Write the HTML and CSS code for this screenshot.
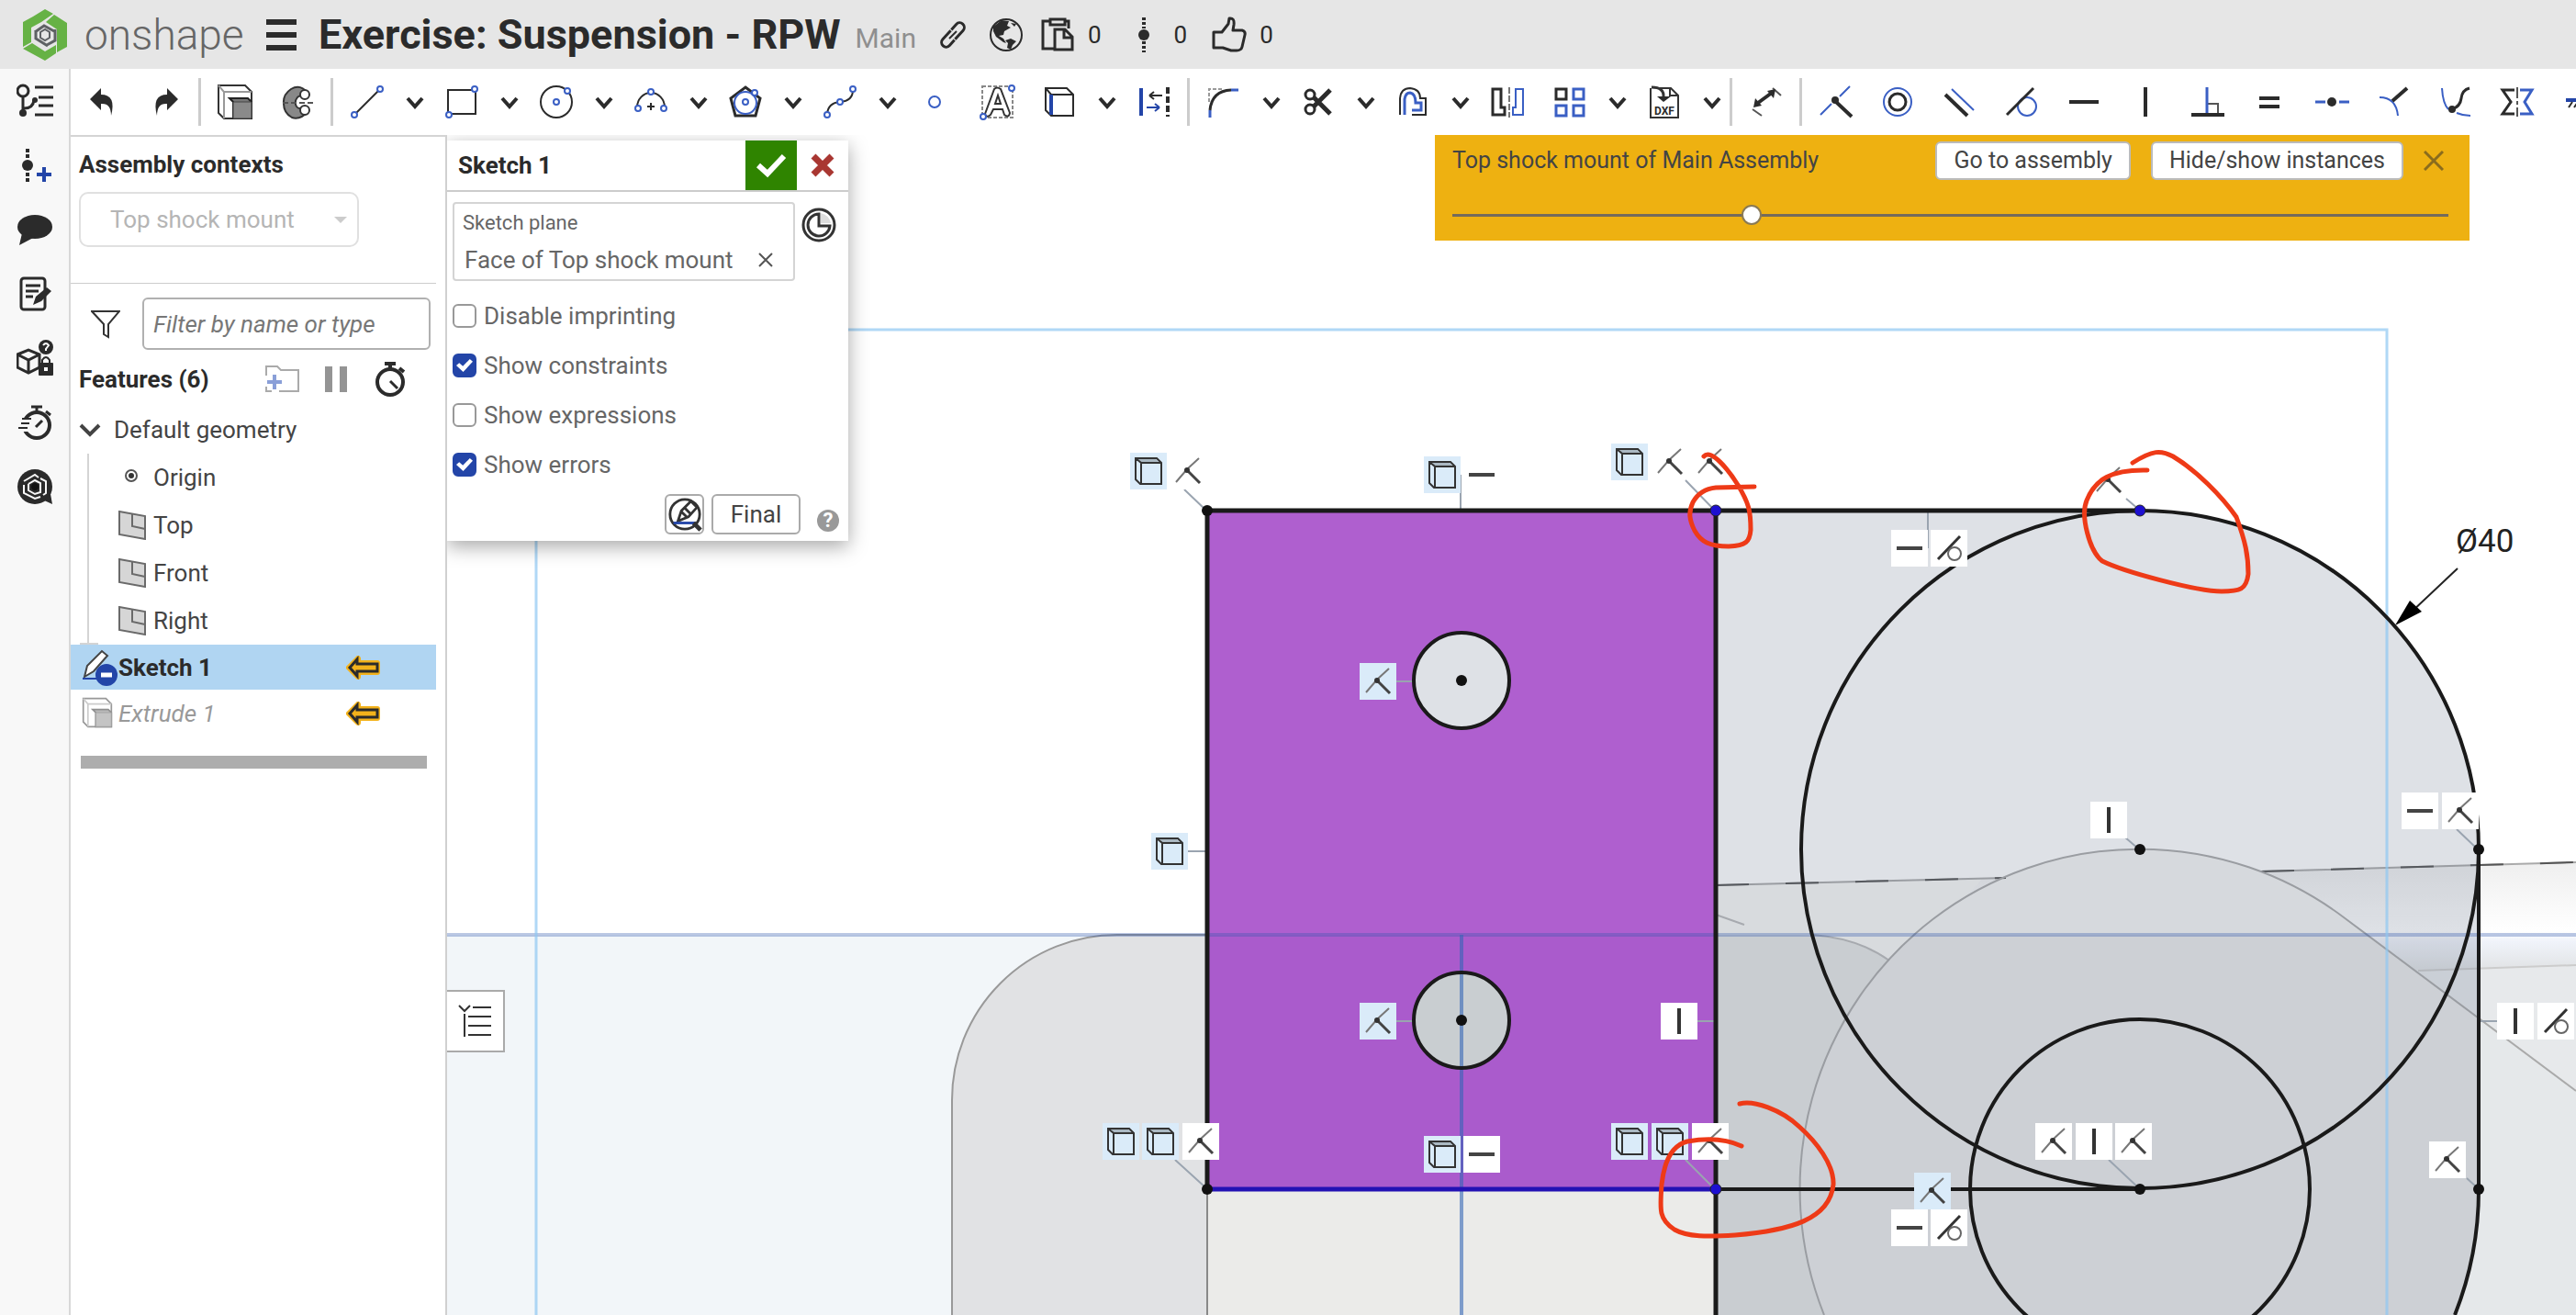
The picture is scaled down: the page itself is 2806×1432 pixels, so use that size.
FILE: index.html
```html
<!DOCTYPE html>
<html lang="en">
<head>
<meta charset="utf-8">
<meta name="viewport" content="width=device-width, initial-scale=1">
<title>Exercise: Suspension - RPW</title>
<link rel="stylesheet" href="styles.css">
</head>
<body>
<svg class="defs" aria-hidden="true">
  <defs>
    <symbol id="chevron" viewBox="-12 -12 24 24"><path d="M-8-4 0 5 8-4" fill="none" stroke="#2b2b2b" stroke-width="4"/></symbol>
    <symbol id="cube" viewBox="-20 -20 40 40"><path d="M-12-13H8L12-9H-8Z" fill="#aab8c2"/><path d="M-14-14H9L14-9V14H-9L-14 9ZM-14-14-8-9V13M-8-9H14" fill="none" stroke="#333" stroke-width="2"/></symbol>
    <symbol id="coincident" viewBox="-20 -20 40 40"><path d="M-13 12-1-2 12-14" fill="none" stroke="#777" stroke-width="2"/><path d="M0 0 13 13" stroke="#444" stroke-width="3"/><circle cx="-1" cy="-1" r="3" fill="#333"/></symbol>
    <symbol id="horizontal" viewBox="-20 -20 40 40"><path d="M-14 0H14" stroke="#444" stroke-width="4"/></symbol>
    <symbol id="vertical" viewBox="-20 -20 40 40"><path d="M0-14V14" stroke="#333" stroke-width="4"/></symbol>
    <symbol id="tangent" viewBox="-20 -20 40 40"><path d="M-12 12 12-13" stroke="#333" stroke-width="3"/><circle cx="6" cy="6" r="7" fill="none" stroke="#666" stroke-width="2"/></symbol>
    <symbol id="context-arrow" viewBox="0 0 38 26"><path d="M3 13 13 3V8H34V18H13V23Z" fill="#f3b21b" stroke="#f3b21b" stroke-width="6" stroke-linejoin="round"/><path d="M4 13 12 4V9H34V17H12V22Z" fill="#f3b21b" stroke="#2b2b2b" stroke-width="3"/></symbol>
    <symbol id="plane" viewBox="0 0 30 32"><path d="M1 1 29 6V31L1 26Z" fill="#d6d6d6" stroke="#6a6a6a" stroke-width="2"/><path d="M15 4V17L29 20" fill="none" stroke="#6a6a6a" stroke-width="2"/></symbol>
    <symbol id="extrude" viewBox="-20 -20 40 40"><path d="M-18-18H11L18-11V18H-12L-18 12Z" fill="#fff" stroke="#333" stroke-width="2"/><path d="M-18-18-12-11V18M-12-11H18" fill="none" stroke="#999" stroke-width="2"/><path d="M-6-4-2 0V18H18V0L14-4Z" fill="#777" stroke="#222" stroke-width="2"/><path d="M-2 0H18V18H-2Z" fill="#8a8a8a" stroke="#444"/></symbol>
    <symbol id="stopwatch" viewBox="-20 -20 40 40"><circle cy="3" r="14" fill="none" stroke="#2b2b2b" stroke-width="4"/><path d="M-6-17H6M0-17V-11M10-12 15-8" stroke="#2b2b2b" stroke-width="4"/></symbol>
  </defs>
</svg>

<header class="topbar">
  <a class="brand" href="#" aria-label="onshape">
    <svg class="brand-mark" viewBox="0 0 50 56" aria-hidden="true">
      <path d="M12 8 25 0 34 5 21 14 10 20V36L1 41V14Z" fill="#66b245"/>
      <path d="M35 6 49 15V41L38 47V22L26 14Z" fill="#66b245"/>
      <path d="M1 43 11 37 25 46 37 39V48L25 56Z" fill="#66b245"/>
      <path d="M14 25 24 18 35 24M36 22V34L27 39M28 40 15 32V23" fill="none" stroke="#5e6164" stroke-width="3"/>
      <path d="M20 25 25 22 30 25V31L25 34 20 31Z" fill="none" stroke="#5e6164" stroke-width="2"/>
    </svg>
    <span class="brand-name">onshape</span>
  </a>
  <button class="menu" type="button" aria-label="Menu"><span></span><span></span><span></span></button>
  <h1>Exercise: Suspension - RPW</h1>
  <span class="branch">Main</span>
  <button class="plain link" type="button" aria-label="Share link"><svg viewBox="-20 -20 40 40"><g transform="rotate(-48)" fill="none" stroke="#2b2b2b" stroke-width="3"><path d="M2-5H-11A5 5 0 0 0-11 5H-3"/><path d="M-2 5H11A5 5 0 0 0 11-5H3"/></g><path d="M-4 4 4-4" stroke="#2b2b2b" stroke-width="2"/></svg></button>
  <button class="plain globe" type="button" aria-label="Public"><svg viewBox="-20 -20 40 40"><circle r="17" fill="none" stroke="#2b2b2b" stroke-width="2"/><path d="M-14-9-5-16 3-15 1-10 5-8-2-4-3 0-8 1-3 4 0 9-3 8-11 2-14-4ZM5-13 11-12 9-9ZM-1 6 5 4 11 7 7 11 5 16 1 14 2 9Z" fill="#2b2b2b"/></svg></button>
  <button class="stat" type="button" aria-label="Copies"><svg viewBox="-20 -20 40 40"><path d="M-8-15H-16V15H-2M8-15H12V-7M-8-17H8V-11H-8ZM-3-6H8L16 2V16H-3ZM7-6V3H16" fill="none" stroke="#2b2b2b" stroke-width="3"/></svg><span>0</span></button>
  <button class="stat" type="button" aria-label="Versions"><svg viewBox="-20 -20 40 40"><circle r="6" fill="#2b2b2b"/><path d="M0-19V-7M0 7V19" stroke="#2b2b2b" stroke-width="4" stroke-dasharray="3 2"/></svg><span>0</span></button>
  <button class="stat" type="button" aria-label="Likes"><svg viewBox="-20 -20 40 40"><path d="M-17-3H-8L-1-12 0-18Q6-19 5-11L4-5H14Q18-4 17 0L14 13Q13 17 8 17H2L-7 14H-17Z" fill="none" stroke="#2b2b2b" stroke-width="3" stroke-linejoin="round"/></svg><span>0</span></button>
</header>

<div class="workspace">
  <nav class="rail" aria-label="Tools">
    <button type="button" aria-label="Structure"><svg viewBox="-20 -20 40 40"><g fill="none" stroke="#2b2b2b" stroke-width="3"><circle cx="-13" cy="-11" r="6"/><path d="M-13-5V12M-12 8Q-2 8-1-1M0-15H20M4-4H20M4 5H20M0 15H20"/></g><circle cx="-13" cy="13" r="4" fill="#2b2b2b"/><circle cx="0" cy="-1" r="3" fill="#2b2b2b"/></svg></button>
    <button type="button" aria-label="Create version"><svg viewBox="-20 -20 40 40"><circle cx="-8" r="6" fill="#2b2b2b"/><path d="M-8-18V-7M-8 8V19" stroke="#2b2b2b" stroke-width="4" stroke-dasharray="4 2"/><path d="M2 10H18M10 2V18" stroke="#2345a8" stroke-width="4"/></svg></button>
    <button type="button" aria-label="Comments"><svg viewBox="-20 -20 40 40"><ellipse cy="-3" rx="19" ry="13" fill="#2b2b2b"/><path d="M-14 4-17 17 0 8Z" fill="#2b2b2b"/></svg></button>
    <button type="button" aria-label="Notes"><svg viewBox="-20 -20 40 40"><rect x="-15" y="-17" width="26" height="34" rx="3" fill="none" stroke="#2b2b2b" stroke-width="3"/><path d="M-10-9H6M-10-3H4M-10 3H-2" stroke="#2b2b2b" stroke-width="3"/><path d="M-2 12 1 3 13-7 18-3 7 8Z" fill="#2b2b2b"/></svg></button>
    <button type="button" aria-label="Part lock"><svg viewBox="-20 -20 40 40"><path d="M-19-4-7-9 5-4V10L-7 16-19 10ZM-19-4-7 2 5-4M-7 2V16" fill="none" stroke="#2b2b2b" stroke-width="3"/><circle cx="12" cy="-12" r="8" fill="#2b2b2b"/><path d="M9-14Q12-18 15-14L12-10V-8" fill="none" stroke="#fff" stroke-width="2"/><path d="M8 6V2Q12-4 16 2V6" fill="none" stroke="#2b2b2b" stroke-width="2"/><rect x="4" y="5" width="16" height="14" rx="1" fill="#2b2b2b"/><rect x="10" y="10" width="4" height="4" fill="#fff"/></svg></button>
    <button type="button" aria-label="Performance"><svg viewBox="-20 -20 40 40"><circle cx="2" cy="3" r="14" fill="none" stroke="#2b2b2b" stroke-width="4"/><path d="M-14-5H-4V10H-14Z" fill="#f8f8f8"/><path d="M-4-17H8M2-17V-11M12-12 17-8" stroke="#2b2b2b" stroke-width="3"/><path d="M-14-4H-4M-15 1H-6M-18 6H-8" stroke="#2b2b2b" stroke-width="2"/><path d="M1 5 8-2" stroke="#2b2b2b" stroke-width="3"/></svg></button>
    <button type="button" aria-label="Learning"><svg viewBox="-20 -20 40 40"><circle r="19" fill="#2b2b2b"/><path d="M8 14 19 19 17 8Z" fill="#2b2b2b"/><path d="M-12-6 0-13 4-10M6-9 12-6V7L9 9M6 11 0 13-12 7V-2M-7-3 0-7 6-4V6L0 8-7 4V-3" fill="none" stroke="#f8f8f8" stroke-width="2"/><circle r="4" fill="#111"/></svg></button>
  </nav>

  <div class="toolbar" role="toolbar" aria-label="Sketch tools">
    <button class="tool" type="button" aria-label="Undo"><svg viewBox="-20 -20 40 40"><path d="M-14-3-2-15V-8Q15-8 9 15 9 1-2 2V9Z" fill="#2b2b2b"/></svg></button>
    <button class="tool" type="button" aria-label="Redo"><svg viewBox="-20 -20 40 40"><path d="M14-3 2-15V-8Q-15-8-9 15-9 1 2 2V9Z" fill="#2b2b2b"/></svg></button>
    <span class="sep"></span>
    <button class="tool" type="button" aria-label="Extrude"><svg><use href="#extrude"/></svg></button>
    <button class="tool" type="button" aria-label="Revolve"><svg viewBox="-20 -20 40 40"><path d="M11-10Q3-20-7-14-16-8-15 2-15 12-6 17 3 20 12 10L6 5Q2 9-1 5-4 0 0-5 3-8 6-5Z" fill="#888" stroke="#333" stroke-width="2"/><circle cx="8" cy="-8" r="5" fill="#fff" stroke="#333" stroke-width="2"/><circle cx="8" cy="9" r="5" fill="#fff" stroke="#333" stroke-width="2"/><path d="M-16 1H18" stroke="#555" stroke-width="2" stroke-dasharray="6 3"/></svg></button>
    <span class="sep"></span>
    <button class="tool" type="button" aria-label="Line"><svg viewBox="-20 -20 40 40"><path d="M-12 12 12-12" stroke="#2b2b2b" stroke-width="2"/><g fill="#fff" stroke="#3a5fc4" stroke-width="2"><circle cx="14" cy="-14" r="3"/><circle cx="-14" cy="14" r="3"/></g></svg></button>
    <button class="drop" type="button" aria-label="More lines"><svg><use href="#chevron"/></svg></button>
    <button class="tool" type="button" aria-label="Rectangle"><svg viewBox="-20 -20 40 40"><path d="M-15-13H15V13H-15Z" fill="none" stroke="#2b2b2b" stroke-width="2"/><g fill="#fff" stroke="#3a5fc4" stroke-width="2"><circle cx="14" cy="-14" r="3"/><circle cx="-14" cy="14" r="3"/></g></svg></button>
    <button class="drop" type="button" aria-label="More rectangles"><svg><use href="#chevron"/></svg></button>
    <button class="tool" type="button" aria-label="Circle"><svg viewBox="-20 -20 40 40"><circle r="17" fill="none" stroke="#2b2b2b" stroke-width="2"/><g fill="#fff" stroke="#3a5fc4" stroke-width="2"><circle r="3"/><circle cx="12" cy="-12" r="3"/></g></svg></button>
    <button class="drop" type="button" aria-label="More circles"><svg><use href="#chevron"/></svg></button>
    <button class="tool" type="button" aria-label="Arc"><svg viewBox="-20 -20 40 40"><path d="M-15 6A15 16 0 0 1 15 6M-4 5H4M0 1V9" fill="none" stroke="#2b2b2b" stroke-width="2"/><g fill="#fff" stroke="#3a5fc4" stroke-width="2"><circle cy="-11" r="3"/><circle cx="-14" cy="7" r="3"/><circle cx="14" cy="7" r="3"/></g></svg></button>
    <button class="drop" type="button" aria-label="More arcs"><svg><use href="#chevron"/></svg></button>
    <button class="tool" type="button" aria-label="Polygon"><svg viewBox="-20 -20 40 40"><path d="M0-16 16-4 11 15H-11L-16-4Z" fill="none" stroke="#2b2b2b" stroke-width="3"/><circle cy="1" r="12" fill="none" stroke="#3a5fc4" stroke-width="2"/><g fill="#fff" stroke="#3a5fc4" stroke-width="2"><circle r="3"/><circle cx="10" cy="-10" r="3"/></g></svg></button>
    <button class="drop" type="button" aria-label="More polygons"><svg><use href="#chevron"/></svg></button>
    <button class="tool" type="button" aria-label="Spline"><svg viewBox="-20 -20 40 40"><path d="M-14 13Q-13 1 0 0 14-1 14-13" fill="none" stroke="#2b2b2b" stroke-width="2"/><g fill="#fff" stroke="#3a5fc4" stroke-width="2"><circle r="3"/><circle cx="14" cy="-14" r="3"/><circle cx="-14" cy="14" r="3"/></g></svg></button>
    <button class="drop" type="button" aria-label="More splines"><svg><use href="#chevron"/></svg></button>
    <button class="tool" type="button" aria-label="Point"><svg viewBox="-20 -20 40 40"><circle r="6" fill="none" stroke="#3a5fc4" stroke-width="2"/></svg></button>
    <button class="tool" type="button" aria-label="Text"><svg viewBox="-20 -20 40 40"><path d="M-16-17H17V17H-16Z" fill="none" stroke="#888" stroke-width="2" stroke-dasharray="4 2"/><path d="M-3-14Q0-17 4-14L14 12Q13 18 8 14L6 8H-4L-7 14Q-12 18-13 13ZM-2 2H4L1-7Z" fill="#fff" stroke="#333" stroke-width="2"/><g fill="#fff" stroke="#3a5fc4" stroke-width="2"><circle cx="16" cy="-15" r="3"/><circle cx="-15" cy="16" r="3"/></g></svg></button>
    <button class="tool" type="button" aria-label="Use"><svg viewBox="-20 -20 40 40"><path d="M-15-15H8L15-8V15H-9L-15 9ZM-15-15-9-8H15" fill="none" stroke="#2b2b2b" stroke-width="2"/><path d="M-9-8V14" stroke="#2345a8" stroke-width="4"/></svg></button>
    <button class="drop" type="button" aria-label="More projection tools"><svg><use href="#chevron"/></svg></button>
    <button class="tool" type="button" aria-label="Construction"><svg viewBox="-20 -20 40 40"><path d="M-14-15V15" stroke="#2345a8" stroke-width="4"/><path d="M15-16V16" stroke="#2b2b2b" stroke-width="4" stroke-dasharray="7 3"/><path d="M-5-7H9M-5-7 0-11M-5-7 0-3" fill="none" stroke="#2b2b2b" stroke-width="2"/><path d="M-8 6H6M6 6 1 2M6 6 1 10" fill="none" stroke="#2345a8" stroke-width="2"/></svg></button>
    <span class="sep"></span>
    <button class="tool" type="button" aria-label="Fillet"><svg viewBox="-20 -20 40 40"><path d="M-16 0V-14H0" fill="none" stroke="#999" stroke-width="2" stroke-dasharray="4 2"/><path d="M-15 17V9M8-13H16" stroke="#3a5fc4" stroke-width="3"/><path d="M-15 9Q-13-12 8-13" fill="none" stroke="#2b2b2b" stroke-width="3"/></svg></button>
    <button class="drop" type="button" aria-label="More fillets"><svg><use href="#chevron"/></svg></button>
    <button class="tool" type="button" aria-label="Trim"><svg viewBox="-20 -20 40 40"><g fill="none" stroke="#2b2b2b"><circle cx="-9" cy="-8" r="5" stroke-width="3"/><circle cx="-9" cy="8" r="5" stroke-width="3"/><path d="M-5-5 13 13M-5 5 13-13" stroke-width="5"/></g></svg></button>
    <button class="drop" type="button" aria-label="More trims"><svg><use href="#chevron"/></svg></button>
    <button class="tool" type="button" aria-label="Offset"><svg viewBox="-20 -20 40 40"><path d="M-14 14V-4Q-13-15-3-15 8-14 8-4H14V14H-1" fill="none" stroke="#2b2b2b" stroke-width="2"/><path d="M-9 14V-3Q-8-10-3-10 3-9 3 1H9V9H-1" fill="none" stroke="#3a5fc4" stroke-width="3"/></svg></button>
    <button class="drop" type="button" aria-label="More offsets"><svg><use href="#chevron"/></svg></button>
    <button class="tool" type="button" aria-label="Mirror"><svg viewBox="-20 -20 40 40"><path d="M-16-14H-7V6H-3V14H-16Z" fill="none" stroke="#2b2b2b" stroke-width="3"/><path d="M17-14H9V6H6V14H17Z" fill="none" stroke="#3a5fc4" stroke-width="2"/><path d="M2-16V17" stroke="#777" stroke-width="2" stroke-dasharray="7 2"/></svg></button>
    <button class="tool" type="button" aria-label="Pattern"><svg viewBox="-20 -20 40 40"><path d="M-15-14H-4V-3H-15Z" fill="none" stroke="#2b2b2b" stroke-width="3"/><path d="M4-14H15V-3H4ZM-15 4H-4V15H-15ZM4 4H15V15H4Z" fill="none" stroke="#3a5fc4" stroke-width="3"/></svg></button>
    <button class="drop" type="button" aria-label="More patterns"><svg><use href="#chevron"/></svg></button>
    <button class="tool" type="button" aria-label="Import DXF"><svg viewBox="-20 -20 40 40"><path d="M-5-15H7L15-7V17H-15V-15M6-15V-7H15" fill="none" stroke="#333" stroke-width="2"/><path d="M-14-16Q0-16-1-5" fill="none" stroke="#333" stroke-width="3"/><path d="M-8-6H7L-1 0Z" fill="#2b2b2b"/><text x="0" y="14" class="dxf">DXF</text></svg></button>
    <button class="drop" type="button" aria-label="More imports"><svg><use href="#chevron"/></svg></button>
    <span class="sep"></span>
    <button class="tool" type="button" aria-label="Dimension"><svg viewBox="-20 -20 40 40"><path d="M-15 8-5 15M7-15 16-7" stroke="#555" stroke-width="2"/><path d="M-9 1 6-10" stroke="#2b2b2b" stroke-width="4"/><path d="M-14 6-12-4-5 4ZM10-14 8-4 1-12Z" fill="#2b2b2b"/></svg></button>
    <span class="sep"></span>
    <div class="constraints">
      <button type="button" aria-label="Coincident"><svg viewBox="-20 -20 40 40"><path d="M-17 14-5 2M4-6 15-17" stroke="#3a5fc4" stroke-width="2"/><path d="M0 0 17 16" stroke="#2b2b2b" stroke-width="4"/><circle cx="-1" cy="-2" r="4" fill="#2b2b2b"/></svg></button>
      <button type="button" aria-label="Concentric"><svg viewBox="-20 -20 40 40"><circle r="15" fill="none" stroke="#3a5fc4" stroke-width="2"/><circle r="9" fill="none" stroke="#2b2b2b" stroke-width="3"/></svg></button>
      <button type="button" aria-label="Parallel"><svg viewBox="-20 -20 40 40"><path d="M-16-8 8 15" stroke="#2b2b2b" stroke-width="4"/><path d="M-9-14 15 9" stroke="#3a5fc4" stroke-width="2"/></svg></button>
      <button type="button" aria-label="Tangent"><svg viewBox="-20 -20 40 40"><circle cx="6" cy="5" r="10" fill="none" stroke="#3a5fc4" stroke-width="2"/><path d="M-16 14 13-15" stroke="#2b2b2b" stroke-width="3"/></svg></button>
      <button type="button" aria-label="Horizontal"><svg viewBox="-20 -20 40 40"><path d="M-16 0H16" stroke="#2b2b2b" stroke-width="4"/></svg></button>
      <button type="button" aria-label="Vertical"><svg viewBox="-20 -20 40 40"><path d="M0-16V16" stroke="#2b2b2b" stroke-width="4"/></svg></button>
      <button type="button" aria-label="Perpendicular"><svg viewBox="-20 -20 40 40"><path d="M0 2H11V12" fill="none" stroke="#555" stroke-width="2"/><path d="M-1-16V12" stroke="#3a5fc4" stroke-width="3"/><path d="M-18 14H18" stroke="#2b2b2b" stroke-width="4"/></svg></button>
      <button type="button" aria-label="Equal"><svg viewBox="-20 -20 40 40"><path d="M-11-4H11M-11 5H11" stroke="#2b2b2b" stroke-width="4"/></svg></button>
      <button type="button" aria-label="Midpoint"><svg viewBox="-20 -20 40 40"><path d="M-18 0H-7M8 0H19" stroke="#3a5fc4" stroke-width="3"/><circle r="5" fill="#2b2b2b"/></svg></button>
      <button type="button" aria-label="Normal"><svg viewBox="-20 -20 40 40"><path d="M-15-5Q3-5 5 15" fill="none" stroke="#3a5fc4" stroke-width="2"/><path d="M-1-1 15-15" stroke="#2b2b2b" stroke-width="4"/></svg></button>
      <button type="button" aria-label="Pierce"><svg viewBox="-20 -20 40 40"><path d="M-15-15Q-14 2-8 8M1 12Q8 15 16 15" fill="none" stroke="#3a5fc4" stroke-width="2"/><path d="M-4 8Q5 5 6-4 7-13 15-15" fill="none" stroke="#2b2b2b" stroke-width="3"/><circle cx="-4" cy="8" r="4" fill="#2b2b2b"/></svg></button>
      <button type="button" aria-label="Symmetric"><svg viewBox="-20 -20 40 40"><path d="M-3-13H-16L-7 0-16 13H-3" fill="none" stroke="#2b2b2b" stroke-width="3"/><path d="M3-13H16L8 0 16 13H3" fill="none" stroke="#3a5fc4" stroke-width="3"/><path d="M0-16V16" stroke="#555" stroke-width="2" stroke-dasharray="12 3 4 3"/></svg></button>
    </div>
    <button class="tool" type="button" aria-label="Fix"><svg viewBox="-20 -20 40 40"><path d="M-15-2H17" stroke="#2345a8" stroke-width="4"/><path d="M-12 6-8 0M-6 6-2 0M0 6 4 0M6 6 10 0" stroke="#2b2b2b" stroke-width="2"/></svg></button>
  </div>

  <aside class="panel">
    <section class="contexts">
      <h2><label for="context">Assembly contexts</label></h2>
      <div class="select">
        <select id="context" disabled><option>Top shock mount</option></select>
        <svg viewBox="0 0 14 8" aria-hidden="true"><path d="M0 0H14L7 7Z" fill="#ccc"/></svg>
      </div>
    </section>
    <div class="filter">
      <svg viewBox="0 0 32 32" aria-hidden="true"><path d="M1 2H31L19 16V30L14 27V16Z" fill="none" stroke="#333" stroke-width="2"/></svg>
      <input type="text" placeholder="Filter by name or type" aria-label="Filter by name or type">
    </div>
    <div class="features">
      <h2>Features (6)</h2>
      <button class="plain" type="button" aria-label="Add folder"><svg viewBox="-20 -20 40 40"><path d="M-17-4V-14H-5L-1-10H18V13H-3M-17 8V13H-11" fill="none" stroke="#aaa" stroke-width="2"/><path d="M-16 3H0M-8-5V11" stroke="#8a9fd8" stroke-width="4"/></svg></button>
      <button class="plain" type="button" aria-label="Pause"><svg viewBox="-20 -20 40 40"><path d="M-12-14H-4V14H-12ZM4-14H12V14H4Z" fill="#949494"/></svg></button>
      <button class="plain" type="button" aria-label="Regeneration times"><svg viewBox="-20 -20 40 40"><use href="#stopwatch" x="-20" y="-20" width="40" height="40"/><path d="M0 2 8 10" stroke="#2b2b2b" stroke-width="3"/></svg></button>
    </div>
    <ul class="tree">
      <li>
        <div class="row group"><svg viewBox="0 0 24 16" aria-hidden="true"><path d="M2 3 12 13 22 3" fill="none" stroke="#444" stroke-width="4"/></svg>Default geometry</div>
        <ul class="children">
          <li class="row"><svg viewBox="0 0 30 32" aria-hidden="true"><circle cx="14" cy="14" r="6" fill="none" stroke="#555" stroke-width="2"/><circle cx="14" cy="14" r="3" fill="#333"/></svg>Origin</li>
          <li class="row"><svg aria-hidden="true"><use href="#plane"/></svg>Top</li>
          <li class="row"><svg aria-hidden="true"><use href="#plane"/></svg>Front</li>
          <li class="row"><svg aria-hidden="true"><use href="#plane"/></svg>Right</li>
        </ul>
      </li>
      <li class="row feature active"><svg class="kind" viewBox="0 0 40 40" aria-hidden="true"><path d="M3 30 6 18 22 2 28 7 13 24Z" fill="#fff" stroke="#444" stroke-width="2"/><path d="M1 32H18" stroke="#2345a8" stroke-width="2"/><circle cx="27" cy="28" r="12" fill="#2345a8"/><path d="M21 28H33" stroke="#fff" stroke-width="5"/></svg>Sketch 1<svg class="arrow" aria-hidden="true"><use href="#context-arrow"/></svg></li>
      <li class="row feature inactive"><svg class="kind faded" aria-hidden="true"><use href="#extrude" width="34" height="36" y="1"/></svg>Extrude 1<svg class="arrow" aria-hidden="true"><use href="#context-arrow"/></svg></li>
    </ul>
    <div class="rollback"></div>
  </aside>

  <main class="canvas">
    <svg class="drawing" viewBox="487 147 2319 1285" preserveAspectRatio="xMinYMin slice" role="img" aria-label="Sketch of the top shock mount">
      <defs>
        <linearGradient id="arm" x1="0" y1="940" x2="0" y2="1054" gradientUnits="userSpaceOnUse"><stop offset="0" stop-color="#efefef"/><stop offset=".65" stop-color="#fff"/><stop offset=".75" stop-color="#f0f3fa"/><stop offset="1" stop-color="#e2e4e6"/></linearGradient>
      </defs>
      <!-- ground below the horizontal axis -->
      <path d="M487 1018H2806V1432H487Z" fill="#f2f6f9"/>
      <!-- solid parts under the sketch -->
      <path d="M1869 964 2806 939V1432H1869Z" fill="url(#arm)"/>
      <path d="M1869 964 2160 956 2070 1056H1869Z" fill="#f8f8f6"/>
      <path d="M2620 1057 2806 1051V1432H2500Z" fill="#e7e9eb"/>
      <path d="M1037 1432V1198Q1037 1018 1217 1018H1960Q2020 1020 2058 1046L2120 1432Z" fill="#e5e7e5"/>
      <path d="M1037 1432V1198A180 180 0 0 1 1217 1018H1315V1432Z" fill="#e1e2e4"/>
      <path d="M1037 1018H1217A180 180 0 0 0 1037 1198Z" fill="#f2f6f9"/>
      <path d="M1315 1295H1869V1432H1315Z" fill="#ebebe9"/>
      <path d="M1987 1432A370 370 0 0 1 2553 999L2806 1188V1432Z" fill="#eaeaea"/>
      <path d="M2700 1109 2806 1188V1432H2674A370 370 0 0 0 2700 1295Z" fill="#e5e8ea"/>
      <path d="M2084 1018A370 370 0 0 1 2553 999L2578 1018Z" fill="#f6f6f4"/>
      <g fill="none" stroke="#999" stroke-width="2">
        <path d="M1037 1432V1198A180 180 0 0 1 1217 1018H1315"/>
        <path d="M1315 1295V1432" stroke="#888"/>
        <path d="M1869 996 1900 1007M1975 1018Q2025 1022 2058 1046" stroke="#bbb"/>
        <path d="M2634 1057 2806 1051" stroke="#ccc"/>
        <path d="M1869 964 2185 956M2463 949 2806 939" stroke="#aaa"/>
        <path d="M1869 964 2185 956M2463 949 2806 939" stroke="#555" stroke-dasharray="36 40"/>
        <path d="M1987 1432A370 370 0 0 1 2553 999L2806 1188" stroke="#aaa"/>
      </g>
      <!-- closed sketch region -->
      <path d="M1869 556H2331A370 370 0 0 1 2700 925V1295A370 370 0 0 1 2674 1432H1869Z" fill="#5a6982" fill-opacity=".2"/>
      <path d="M1315 556H1869V1295H1315Z" fill="#af5fcf"/>
      <path d="M1315 1018H1869V1295H1315Z" fill="#aa5bcc"/>
      <circle cx="1592" cy="741" r="51" fill="#dee1e6"/>
      <circle cx="1592" cy="1111" r="51" fill="#c9ced1"/>
      <!-- axes and reference plane -->
      <path d="M487 1018H2806" stroke="#3158ae" stroke-opacity=".33" stroke-width="4"/>
      <path d="M1592 1018V1432" stroke="#3465b5" stroke-opacity=".6" stroke-width="4"/>
      <path d="M584 1432V359H2600V1432" fill="none" stroke="#8fc7f2" stroke-opacity=".7" stroke-width="3"/>
      <!-- leaders from constraints to geometry -->
      <path d="M1290 533 1313 555M1591 517V556M1836 523 1868 556M2100 557V597M2316 543 2330 555M2315 912 2329 924M2676 903 2699 925M1280 1263 1313 1293M1836 1263 1868 1295M2297 1263 2330 1294M2687 1283 2699 1294M1521 742H1540M1521 1112H1540M1849 1112H1868M2702 1112H2720M1294 927H1313" fill="none" stroke="#9aa4b0" stroke-width="2"/>
      <!-- sketch geometry -->
      <g fill="none" stroke="#1a1a1a" stroke-width="4">
        <path d="M1315 1295V556H2331M1869 556V1432" stroke-width="5"/>
        <path d="M1869 1295H2331M2700 925V1295A370 370 0 0 1 2674 1432"/>
        <circle cx="2331" cy="925" r="369"/>
        <circle cx="2331" cy="1295" r="185"/>
        <circle cx="1592" cy="741" r="52"/>
        <circle cx="1592" cy="1111" r="52"/>
      </g>
      <path d="M1315 1295H1869" stroke="#2312b4" stroke-width="5"/>
      <path d="M2677 619 2625 668" stroke="#222" stroke-width="2"/>
      <path d="M2609 681 2625 654 2638 666Z"/>
      <g fill="#111">
        <circle cx="1315" cy="556" r="6"/><circle cx="2331" cy="925" r="6"/><circle cx="2700" cy="925" r="6"/><circle cx="2700" cy="1295" r="6"/><circle cx="2331" cy="1295" r="6"/><circle cx="1315" cy="1295" r="6"/><circle cx="1592" cy="741" r="6"/><circle cx="1592" cy="1111" r="6"/>
      </g>
      <g fill="#1d0fd0" stroke="#222" stroke-width="1"><circle cx="1869" cy="556" r="6"/><circle cx="2331" cy="556" r="6"/><circle cx="1869" cy="1295" r="6"/></g>
      <text class="dimension" x="2675" y="601">Ø40</text>
      <!-- constraint glyphs -->
      <g fill="#daebf9">
        <path d="M1231 493h40v40h-40ZM1551 497h40v40h-40ZM1755 483h40v40h-40ZM1481 722h40v40h-40ZM1481 1092h40v40h-40ZM1254 907h40v40h-40ZM1201 1223h40v40h-40ZM1244 1223h40v40h-40ZM1551 1237h40v40h-40ZM1755 1223h40v40h-40ZM1799 1223h40v40h-40ZM2085 1277h40v40h-40Z"/>
      </g>
      <g fill="#fff">
        <path d="M1274 493h40v40h-40ZM1594 497h40v40h-40ZM1809 1092h40v40h-40ZM1288 1223h40v40h-40ZM1594 1237h40v40h-40ZM1843 1223h40v40h-40ZM2060 577h40v40h-40ZM2103 577h40v40h-40ZM2277 873h40v40h-40ZM2616 863h40v40h-40ZM2660 863h40v40h-40ZM2720 1092h40v40h-40ZM2764 1092h40v40h-40ZM2217 1223h40v40h-40ZM2261 1223h40v40h-40ZM2304 1223h40v40h-40ZM2646 1243h40v40h-40ZM2060 1317h40v40h-40ZM2103 1317h40v40h-40Z"/>
      </g>
      <g>
        <use href="#cube" x="1231" y="493" width="40" height="40"/><use href="#cube" x="1551" y="497" width="40" height="40"/><use href="#cube" x="1755" y="483" width="40" height="40"/><use href="#cube" x="1254" y="907" width="40" height="40"/><use href="#cube" x="1201" y="1223" width="40" height="40"/><use href="#cube" x="1244" y="1223" width="40" height="40"/><use href="#cube" x="1551" y="1237" width="40" height="40"/><use href="#cube" x="1755" y="1223" width="40" height="40"/><use href="#cube" x="1799" y="1223" width="40" height="40"/>
        <use href="#coincident" x="1274" y="493" width="40" height="40"/><use href="#coincident" x="1799" y="483" width="40" height="40"/><use href="#coincident" x="1843" y="483" width="40" height="40"/><use href="#coincident" x="1481" y="722" width="40" height="40"/><use href="#coincident" x="1481" y="1092" width="40" height="40"/><use href="#coincident" x="1288" y="1223" width="40" height="40"/><use href="#coincident" x="1843" y="1223" width="40" height="40"/><use href="#coincident" x="2277" y="503" width="40" height="40"/><use href="#coincident" x="2660" y="863" width="40" height="40"/><use href="#coincident" x="2217" y="1223" width="40" height="40"/><use href="#coincident" x="2304" y="1223" width="40" height="40"/><use href="#coincident" x="2646" y="1243" width="40" height="40"/><use href="#coincident" x="2085" y="1277" width="40" height="40"/>
        <use href="#horizontal" x="1594" y="497" width="40" height="40"/><use href="#horizontal" x="1594" y="1237" width="40" height="40"/><use href="#horizontal" x="2060" y="577" width="40" height="40"/><use href="#horizontal" x="2616" y="863" width="40" height="40"/><use href="#horizontal" x="2060" y="1317" width="40" height="40"/>
        <use href="#vertical" x="1809" y="1092" width="40" height="40"/><use href="#vertical" x="2277" y="873" width="40" height="40"/><use href="#vertical" x="2720" y="1092" width="40" height="40"/><use href="#vertical" x="2261" y="1223" width="40" height="40"/>
        <use href="#tangent" x="2103" y="577" width="40" height="40"/><use href="#tangent" x="2764" y="1092" width="40" height="40"/><use href="#tangent" x="2103" y="1317" width="40" height="40"/>
      </g>
      <!-- hand-drawn markup -->
      <g fill="none" stroke="#ee3a17" stroke-width="5" stroke-linecap="round" stroke-linejoin="round">
        <path d="M1856 497C1864 488 1883 512 1893 528C1905 548 1907 556 1907 577C1906 590 1902 594 1883 595C1862 595 1853 590 1846 578C1840 566 1839 558 1844 547C1849 538 1858 532 1869 531L1911 530"/>
        <path d="M2323 504C2345 490 2354 490 2367 497C2392 512 2420 540 2436 563C2446 590 2449 605 2449 625C2447 642 2440 644 2420 644C2392 644 2312 622 2290 611C2276 600 2266 562 2273 545C2282 522 2300 511 2339 512"/>
        <path d="M1895 1202C1910 1198 1940 1208 1960 1227C1978 1243 1998 1268 1997 1290C1993 1328 1950 1340 1890 1345C1860 1347 1838 1347 1824 1339C1807 1328 1808 1318 1810 1290C1813 1262 1822 1247 1838 1243C1860 1239 1880 1240 1897 1248"/>
      </g>
    </svg>

    <form class="dialog" aria-label="Sketch 1">
      <div class="dialog-head">
        <h2>Sketch 1</h2>
        <button class="accept" type="button" aria-label="Accept"><svg viewBox="-20 -20 40 40"><path d="M-14 0-4 9 14-10" fill="none" stroke="#fff" stroke-width="6"/></svg></button>
        <button class="cancel" type="button" aria-label="Cancel"><svg viewBox="-20 -20 40 40"><path d="M-10-10 10 10M10-10-10 10" stroke="#a93732" stroke-width="7"/></svg></button>
      </div>
      <div class="dialog-body">
        <div class="plane-row">
          <div class="plane-box">
            <span class="caption">Sketch plane</span>
            <div class="value"><span>Face of Top shock mount</span><button class="clear" type="button" aria-label="Remove"><svg viewBox="0 0 16 16"><path d="M1 1 15 15M15 1 1 15" stroke="#555" stroke-width="2"/></svg></button></div>
          </div>
          <button class="plain" type="button" aria-label="Final state"><svg viewBox="-20 -20 40 40"><circle r="17" fill="#fff" stroke="#333" stroke-width="3"/><path d="M0-12A12 12 0 1 0 12 1H0Z" fill="none" stroke="#333" stroke-width="3"/><path d="M2-13Q11-11 13-2H2Z" fill="#ddd"/></svg></button>
        </div>
        <label class="check"><input type="checkbox">Disable imprinting</label>
        <label class="check"><input type="checkbox" checked>Show constraints</label>
        <label class="check"><input type="checkbox">Show expressions</label>
        <label class="check"><input type="checkbox" checked>Show errors</label>
        <div class="dialog-foot">
          <button class="zoom" type="button" aria-label="Inspect sketch"><svg viewBox="-20 -20 40 40"><circle r="17" fill="none" stroke="#333" stroke-width="3"/><path d="M-8 8-4-4 7-15 14-8 4 3ZM-4-3 3 4M0-7 7 0" fill="none" stroke="#333" stroke-width="3"/><path d="M-13 10H12" stroke="#2345a8" stroke-width="3"/><path d="M10 10 18 18" stroke="#333" stroke-width="5"/></svg></button>
          <button class="final" type="button">Final</button>
          <button class="help" type="button" aria-label="Help">?</button>
        </div>
      </div>
    </form>

    <div class="notice">
      <div class="notice-row">
        <label for="opacity">Top shock mount of Main Assembly</label>
        <button type="button">Go to assembly</button>
        <button type="button">Hide/show instances</button>
        <button class="close" type="button" aria-label="Close"><svg viewBox="0 0 22 22"><path d="M1 1 21 21M21 1 1 21" stroke="#8a6c1d" stroke-width="3"/></svg></button>
      </div>
      <input id="opacity" type="range" min="0" max="1000" value="296">
    </div>

    <button class="drawer" type="button" aria-label="Toggle list"><svg viewBox="0 0 38 38"><path d="M1 2 7 8 13 2M7 11V36M16 4H36M11 14H36M11 24H36M11 34H36" fill="none" stroke="#333" stroke-width="2"/></svg></button>
  </main>
</div>
</body>
</html>
```

FILE: styles.css
```css
* {
  box-sizing: border-box;
}

body {
  margin: 0;
  height: 100vh;
  display: flex;
  flex-direction: column;
  overflow: hidden;
  font: 26px/32px Roboto, "Liberation Sans", sans-serif;
  color: #444;
  background: #fff;
}

h1,
h2,
ul {
  margin: 0;
  padding: 0;
}

h2 {
  font-size: 26px;
  line-height: 32px;
  font-weight: 700;
  color: #2b2b2b;
}

ul {
  list-style: none;
}

button {
  padding: 0;
  border: 0;
  background: none;
  font: inherit;
  color: inherit;
}

svg {
  display: block;
  flex: none;
}

.defs {
  position: absolute;
  width: 0;
  height: 0;
}

/* Top bar */

.topbar {
  display: flex;
  align-items: center;
  flex: none;
  height: 75px;
  padding: 0 24px;
  background: #e6e6e6;
  color: #2b2b2b;
}

.brand {
  display: flex;
  align-items: center;
  gap: 18px;
  width: 266px;
  color: #666;
  text-decoration: none;
}

.brand-mark {
  width: 50px;
  height: 56px;
}

.brand-name {
  font-size: 46px;
  line-height: 48px;
  font-weight: 300;
}

.menu {
  display: flex;
  flex-direction: column;
  gap: 8px;
  width: 33px;
  margin-right: 24px;
}

.menu span {
  height: 6px;
  background: #2b2b2b;
}

.topbar h1 {
  font-size: 45px;
  line-height: 56px;
  font-weight: 700;
}

.branch {
  margin: 8px 20px 0 16px;
  font-size: 30px;
  color: #8f8f8f;
}

.plain svg,
.stat svg {
  width: 40px;
  height: 40px;
}

.link {
  margin-right: 18px;
}

.globe {
  margin-right: 16px;
}

.stat {
  display: flex;
  align-items: center;
  gap: 13px;
  margin-right: 26px;
}

/* Workspace frame */

.workspace {
  flex: 1;
  min-height: 0;
  display: grid;
  grid-template: 72px minmax(0, 1fr) / 77px 410px minmax(0, 1fr);
}

.rail {
  grid-row: 1 / 3;
  display: flex;
  flex-direction: column;
  background: #f8f8f8;
  border-right: 2px solid #d8d8d8;
}

.rail button {
  display: grid;
  place-items: center;
  height: 70px;
}

.rail svg {
  width: 40px;
  height: 40px;
}

/* Toolbar */

.toolbar {
  grid-column: 2 / 4;
  display: flex;
  align-items: center;
  padding-left: 1px;
  overflow: hidden;
}

.toolbar button {
  display: grid;
  place-items: center;
  flex: none;
  height: 72px;
}

.tool {
  width: 68px;
}

.tool svg,
.constraints svg {
  width: 40px;
  height: 40px;
}

.drop {
  width: 35px;
}

.drop svg {
  width: 24px;
  height: 24px;
}

.sep {
  flex: none;
  width: 3px;
  height: 52px;
  margin: 0 3px 0 2px;
  background: #ccc;
}

.constraints {
  flex: none;
  display: grid;
  grid-template-columns: repeat(12, 1fr);
  width: 810px;
}

.dxf {
  font-size: 12px;
  font-weight: 700;
  text-anchor: middle;
  fill: #2b2b2b;
}

/* Feature panel */

.panel {
  padding: 0 10px 0 0;
  border-top: 2px solid #d4d4d4;
  border-right: 2px solid #d0d0d0;
}

.contexts {
  padding: 14px 0 39px 9px;
  border-bottom: 1px solid #ccc;
}

.select {
  position: relative;
  width: 305px;
  margin-top: 14px;
}

.select select {
  width: 100%;
  height: 60px;
  padding: 0 32px;
  appearance: none;
  border: 2px solid #e0e0e0;
  border-radius: 10px;
  background: #fff;
  font: inherit;
  color: #b5b5b5;
  opacity: 1;
}

.select svg {
  position: absolute;
  top: 27px;
  right: 13px;
  width: 14px;
  height: 8px;
}

.filter {
  display: flex;
  align-items: center;
  gap: 24px;
  margin-top: 15px;
  padding: 0 6px 0 22px;
}

.filter svg {
  width: 32px;
  height: 32px;
}

.filter input {
  flex: 1;
  min-width: 0;
  height: 57px;
  padding: 0 10px;
  border: 2px solid #b0b0b0;
  border-radius: 6px;
  font: inherit;
  font-style: italic;
}

.filter input::placeholder {
  color: #777;
  opacity: 1;
}

.features {
  display: flex;
  align-items: center;
  gap: 19px;
  height: 40px;
  margin-top: 12px;
  padding: 0 30px 0 9px;
}

.features h2 {
  flex: 1;
}

.tree {
  margin-top: 9px;
}

.row {
  display: flex;
  align-items: center;
  gap: 8px;
  height: 52px;
}

.group {
  gap: 14px;
  padding-left: 9px;
}

.group svg {
  width: 24px;
  height: 16px;
}

.children {
  position: relative;
  margin-left: 18px;
  padding-left: 32px;
  border-left: 2px solid #d4d4d4;
}

.children::after {
  content: "";
  position: absolute;
  left: -10px;
  bottom: 0;
  width: 20px;
  height: 2px;
  background: #d4d4d4;
}

.children svg {
  width: 30px;
  height: 32px;
}

.feature {
  gap: 0;
  padding: 0 60px 0 12px;
}

.feature .kind {
  width: 40px;
  height: 40px;
}

.feature .arrow {
  width: 38px;
  height: 26px;
  margin-left: auto;
}

.active {
  height: 49px;
  font-weight: 700;
  color: #2b2b2b;
  background: #b0d5f2;
}

.inactive {
  font-style: italic;
  color: #999;
}

.faded {
  opacity: .5;
}

.rollback {
  height: 14px;
  margin: 20px 10px 0 11px;
  background: #adadad;
}

/* Canvas */

.canvas {
  position: relative;
  overflow: hidden;
}

.drawing {
  position: absolute;
  inset: 0;
  width: 100%;
  height: 100%;
}

.dimension {
  font-size: 35px;
  fill: #222;
}

/* Sketch dialog */

.dialog {
  position: absolute;
  top: 6px;
  left: 0;
  width: 437px;
  background: #fff;
  color: #666;
  box-shadow: 0 6px 20px rgba(0, 0, 0, .35);
}

.dialog-head {
  display: flex;
  align-items: center;
  height: 56px;
  padding-left: 12px;
  border-bottom: 2px solid #ccc;
}

.dialog-head h2 {
  flex: 1;
}

.dialog-head button {
  display: grid;
  place-items: center;
  width: 56px;
  height: 54px;
}

.dialog-head svg {
  width: 40px;
  height: 40px;
}

.accept {
  background: #2f8400;
}

.dialog-body {
  padding: 11px 6px 7px;
}

.plane-row {
  display: flex;
  align-items: flex-start;
  gap: 6px;
  margin-bottom: 11px;
}

.plane-row .plain {
  margin-top: 5px;
}

.plane-box {
  width: 373px;
  height: 86px;
  padding: 5px 22px 0 9px;
  border: 2px solid #d4d4d4;
  border-radius: 4px;
}

.caption {
  display: block;
  font-size: 22px;
  line-height: 32px;
}

.value {
  display: flex;
  align-items: center;
  justify-content: space-between;
  height: 48px;
  padding-left: 2px;
}

.clear svg {
  width: 16px;
  height: 16px;
}

.check {
  display: flex;
  align-items: center;
  gap: 8px;
  height: 54px;
}

.check input {
  flex: none;
  display: grid;
  place-items: center;
  width: 26px;
  height: 26px;
  margin: 0;
  appearance: none;
  border: 2px solid #999;
  border-radius: 6px;
  background: #fff;
}

.check input:checked {
  border-color: #2345a8;
  background: #2345a8;
}

.check input:checked::before {
  content: "";
  width: 18px;
  height: 14px;
  background: #fff;
  clip-path: polygon(0 50%, 18% 30%, 40% 56%, 82% 0, 100% 20%, 42% 100%);
}

.dialog-foot {
  display: flex;
  justify-content: flex-end;
  gap: 8px;
  margin-top: 5px;
  padding-right: 4px;
}

.zoom,
.final {
  display: grid;
  place-items: center;
  height: 44px;
  border: 2px solid #aaa;
  border-radius: 6px;
  color: #444;
}

.zoom {
  width: 43px;
}

.zoom svg {
  width: 38px;
  height: 38px;
}

.final {
  width: 97px;
}

.help {
  align-self: flex-end;
  width: 24px;
  height: 24px;
  margin: 0 0 3px 10px;
  border-radius: 50%;
  background: #999;
  color: #fff;
  font-size: 22px;
  line-height: 24px;
  font-weight: 700;
}

/* Context notice */

.notice {
  position: absolute;
  top: 0;
  right: 116px;
  width: 1127px;
  height: 115px;
  padding: 7px 23px 0 19px;
  background: #eeb111;
  color: #444;
  font-size: 25px;
}

.notice-row {
  display: flex;
  align-items: center;
  gap: 22px;
}

.notice-row label {
  flex: 1;
}

.notice-row button {
  height: 42px;
  padding: 0 18px;
  border: 2px solid #bbb;
  border-radius: 6px;
  background: #fff;
}

.notice-row .close {
  padding: 0 5px 0 0;
  border: 0;
  background: none;
}

.close svg {
  width: 22px;
  height: 22px;
}

.notice input {
  display: block;
  width: 100%;
  height: 22px;
  margin: 27px 0 0;
  appearance: none;
  background: linear-gradient(#746b5c, #746b5c) center / 100% 3px no-repeat;
}

.notice input::-webkit-slider-thumb {
  appearance: none;
  width: 22px;
  height: 22px;
  border: 2px solid #8a7a55;
  border-radius: 50%;
  background: #fff;
}

.drawer {
  position: absolute;
  top: 931px;
  left: 0;
  display: grid;
  place-items: center;
  width: 63px;
  height: 68px;
  border: 2px solid #aaa;
  border-left: 0;
  background: #fff;
}

.drawer svg {
  width: 38px;
  height: 38px;
}
```
